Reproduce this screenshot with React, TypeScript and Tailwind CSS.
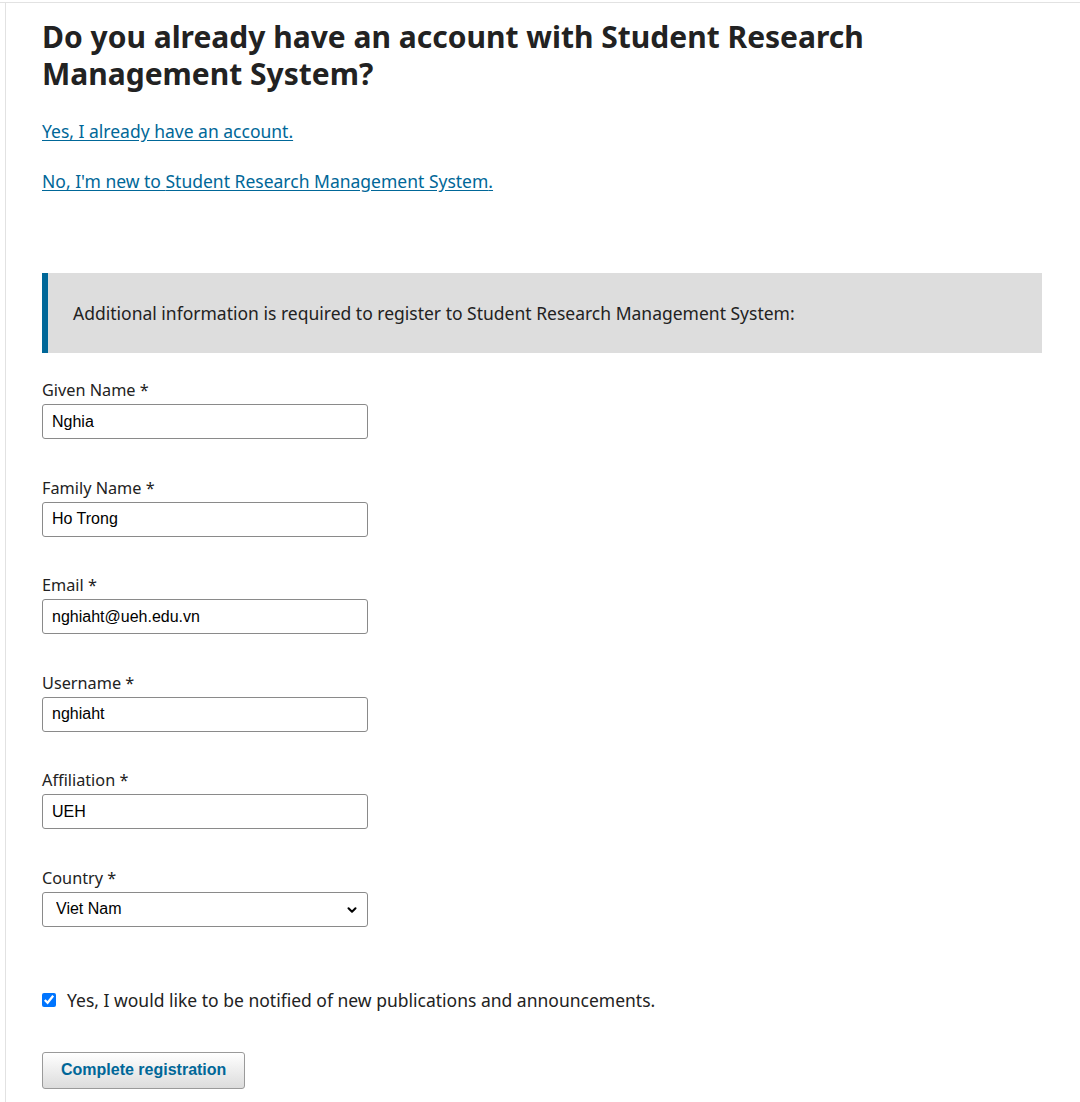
import { ChevronDown } from "lucide-react";

type Field = { label: string; value: string };

const fields: Field[] = [
  { label: "Given Name", value: "Nghia" },
  { label: "Family Name", value: "Ho Trong" },
  { label: "Email", value: "nghiaht@ueh.edu.vn" },
  { label: "Username", value: "nghiaht" },
  { label: "Affiliation", value: "UEH" },
];

const siteName = "Student Research Management System";

export default function App() {
  return (
    <div className="min-h-screen bg-white font-['Noto_Sans',sans-serif] text-[rgba(0,0,0,0.87)]">
      <div className="mt-[2px] border-t border-[#e2e2e2]">
        <div className="ml-[5px] border-l border-[#e2e2e2] pl-[36px] pt-[15px] pb-[14px]">
          <div className="w-[1000px]">
            <h1 className="text-[30px] leading-[37px] font-bold text-[#222] w-[860px]">
              Do you already have an account with {siteName}?
            </h1>

            <div className="mt-[29px] flex flex-col gap-[29px] text-[17.5px] leading-[21px]">
              <a href="#" className="text-[#006798] underline underline-offset-2 self-start">
                Yes, I already have an account.
              </a>
              <a href="#" className="text-[#006798] underline underline-offset-2 self-start">
                No, I'm new to {siteName}.
              </a>
            </div>

            <div className="mt-[81px] h-[80px] flex items-center bg-[#dddddd] border-l-[6px] border-[#006798] pl-[25px] text-[17.5px] text-[#222]">
              Additional information is required to register to {siteName}:
            </div>

            <form className="mt-[27px]" onSubmit={(e) => e.preventDefault()}>
              <div className="flex flex-col gap-[38.5px]">
                {fields.map((f) => (
                  <div key={f.label}>
                    <label className="block text-[16.25px] leading-[21px] mb-[3px] text-[#222]">
                      {f.label} *
                    </label>
                    <input
                      defaultValue={f.value}
                      className="w-[326px] h-[35px] rounded-[3px] border border-[#8a8a8a] px-[9px] font-['Liberation_Sans',Arial,sans-serif] text-[16px] text-black"
                    />
                  </div>
                ))}
                <div>
                  <label className="block text-[16.25px] leading-[21px] mb-[3px] text-[#222]">
                    Country *
                  </label>
                  <div className="relative w-[326px]">
                    <select
                      defaultValue="VN"
                      className="w-full h-[35px] appearance-none rounded-[3px] border border-[#8a8a8a] bg-white pl-[13px] font-['Liberation_Sans',Arial,sans-serif] text-[16px] text-black"
                    >
                      <option value="VN">Viet Nam</option>
                    </select>
                    <ChevronDown
                      size={14}
                      strokeWidth={3.5}
                      className="pointer-events-none absolute right-[9px] top-[11px] text-black"
                    />
                  </div>
                </div>
              </div>

              <label className="mt-[63px] flex items-center gap-[11px] text-[17.5px] leading-[21px] text-[#222]">
                <input type="checkbox" defaultChecked className="w-[14px] h-[14px] accent-[#0075ff] m-0" />
                Yes, I would like to be notified of new publications and announcements.
              </label>

              <button
                type="submit"
                className="mt-[41px] h-[37px] px-[18px] rounded-[3px] border border-[#9a9a9a] bg-gradient-to-b from-white to-[#dcdcdc] font-['Liberation_Sans',Arial,sans-serif] text-[16px] font-bold text-[#006798]"
              >
                Complete registration
              </button>
            </form>
          </div>
        </div>
      </div>
    </div>
  );
}
